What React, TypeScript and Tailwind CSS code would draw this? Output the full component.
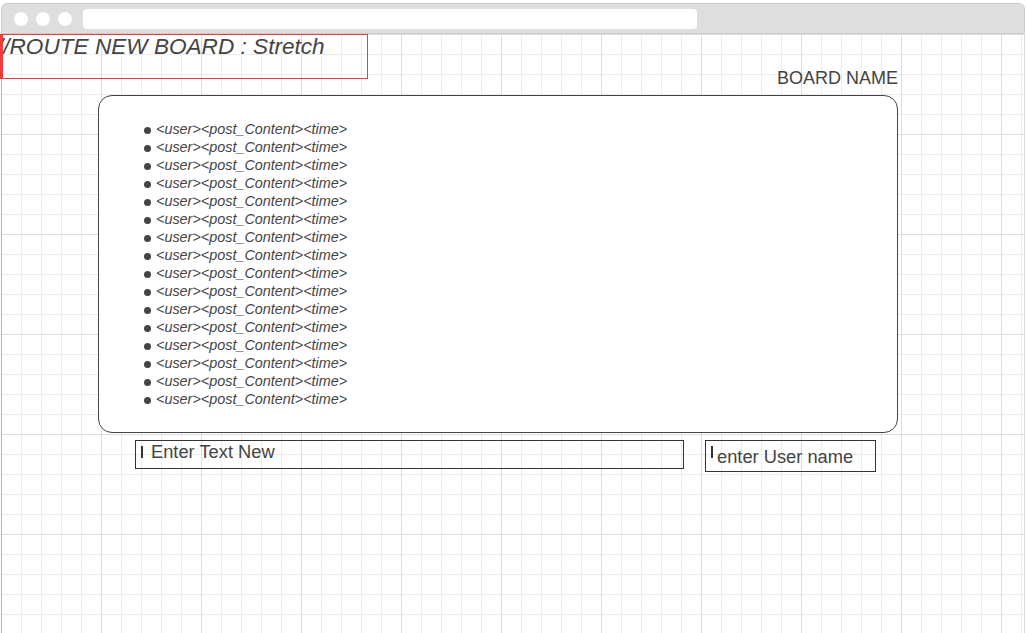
import React from 'react';

const posts = Array.from({ length: 16 }, () => '<user><post_Content><time>');

const BrowserChrome: React.FC = () => (
  <div className="h-[31px] bg-[#dedede] border-t border-x border-b border-[#cbcbcb] rounded-t-[6px] flex items-center pl-[12px] pt-[1px]">
    <div className="flex items-center gap-[8px]">
      <span className="w-[14px] h-[14px] rounded-full bg-white" />
      <span className="w-[14px] h-[14px] rounded-full bg-white" />
      <span className="w-[14px] h-[14px] rounded-full bg-white" />
    </div>
    <div className="ml-[11px] w-[614px] h-[20px] bg-white rounded-[4px]" />
  </div>
);

const App: React.FC = () => {
  return (
    <div className="w-[1026px] h-[633px] bg-white overflow-hidden pt-[3px] font-['Liberation_Sans',Arial,sans-serif] text-[#444]">
      <div className="ml-[1px] w-[1024px] flex flex-col">
        <BrowserChrome />

        <div className="h-[600px] border-l border-l-[#e9a292] border-r border-r-[#dcdcdc] bg-[image:linear-gradient(to_right,#dcdcdc_1px,transparent_1px),linear-gradient(to_bottom,#dcdcdc_1px,transparent_1px),linear-gradient(to_right,#ececec_1px,transparent_1px),linear-gradient(to_bottom,#ececec_1px,transparent_1px)] bg-[size:100px_100px,100px_100px,20px_20px,20px_20px] bg-[position:-1px_0]">
          {/* route annotation */}
          <div className="-ml-[2px] w-[368px] h-[45px] border border-[#f23b3b] border-l-[3px] overflow-hidden">
            <p className="-ml-[6px] text-[22.6px] leading-[24px] italic whitespace-nowrap">//ROUTE NEW BOARD : Stretch</p>
          </div>

          <div className="ml-[96px] w-[800px] flex flex-col">
            <div className="-mt-[11px] text-right text-[18px] leading-[20px]">BOARD NAME</div>

            <div className="mt-[7px] h-[338px] bg-white border border-[#444] rounded-[14px] pt-[25px] pl-[45px]">
              <ul className="flex flex-col">
                {posts.map((p, i) => (
                  <li key={i} className="flex items-center h-[18px] text-[14.4px] italic">
                    <span className="w-[7px] h-[7px] rounded-full bg-[#444] mr-[5px]" />
                    {p}
                  </li>
                ))}
              </ul>
            </div>

            <div className="mt-[7px] flex items-start">
              <div className="ml-[37px] w-[549px] h-[29px] border border-[#333] flex items-start pl-[5px] pt-[1px]">
                <span className="mt-[4px] w-[2px] h-[12px] bg-[#333]" />
                <span className="ml-[8px] text-[18.3px] leading-[20px]">Enter Text New</span>
              </div>
              <div className="ml-[21px] w-[171px] h-[32px] border border-[#333] flex items-start pl-[5px] pt-[4px]">
                <span className="mt-[1px] w-[2px] h-[12px] bg-[#333]" />
                <span className="ml-[4px] mt-[2px] text-[18.3px] leading-[20px]">enter User name</span>
              </div>
            </div>
          </div>
        </div>
      </div>
    </div>
  );
};

export default App;
